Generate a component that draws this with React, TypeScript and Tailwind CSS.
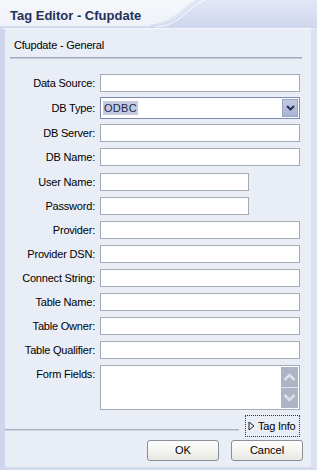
import React from "react";

const rows: { label: string; w: string; mt: string; kind?: "select" }[] = [
  { label: "Data Source:", w: "w-[200px]", mt: "mt-[15px]" },
  { label: "DB Type:", w: "w-[200px]", mt: "mt-[5px]", kind: "select" },
  { label: "DB Server:", w: "w-[200px]", mt: "mt-[5px]" },
  { label: "DB Name:", w: "w-[200px]", mt: "mt-[6px]" },
  { label: "User Name:", w: "w-[149px]", mt: "mt-[7px]" },
  { label: "Password:", w: "w-[149px]", mt: "mt-[6px]" },
  { label: "Provider:", w: "w-[200px]", mt: "mt-[6px]" },
  { label: "Provider DSN:", w: "w-[200px]", mt: "mt-[6px]" },
  { label: "Connect String:", w: "w-[200px]", mt: "mt-[6px]" },
  { label: "Table Name:", w: "w-[200px]", mt: "mt-[6px]" },
  { label: "Table Owner:", w: "w-[200px]", mt: "mt-[6px]" },
  { label: "Table Qualifier:", w: "w-[200px]", mt: "mt-[6px]" },
];

function Chevron({ up, color, big }: { up?: boolean; color: string; big?: boolean }) {
  if (big) {
    return (
      <svg width="13" height="8" viewBox="0 0 13 8">
        <path
          d={up ? "M1.5 7 L6.5 2 L11.5 7" : "M1.5 1 L6.5 6 L11.5 1"}
          fill="none"
          stroke={color}
          strokeWidth="2.5"
        />
      </svg>
    );
  }
  return (
    <svg width="9" height="6" viewBox="0 0 9 6">
      <path
        d={up ? "M1 5 L4.5 1.5 L8 5" : "M1 1 L4.5 4.5 L8 1"}
        fill="none"
        stroke={color}
        strokeWidth="2"
      />
    </svg>
  );
}

export default function App() {
  return (
    <div
      className="w-[317px] h-[470px] overflow-hidden bg-[#e9edf6] flex flex-col text-black"
      style={{ fontFamily: '"Liberation Sans", Arial, sans-serif' }}
    >
      {/* Title bar */}
      <div className="relative h-[28px] shrink-0 bg-gradient-to-b from-[#e2e7f5] to-[#cfd7ee]">
        <svg className="absolute inset-0" width="317" height="28" viewBox="0 0 317 28">
          <defs>
            <linearGradient id="tab" x1="0" y1="0" x2="0" y2="1">
              <stop offset="0" stopColor="#f7f8fc" />
              <stop offset="1" stopColor="#eef1f8" />
            </linearGradient>
          </defs>
          <path d="M0 0 H200 C185 4 178 24 152 26 H0 Z" fill="url(#tab)" />
          <path d="M205 0 C188 6 182 25 156 27" fill="none" stroke="#ffffff" strokeWidth="1" opacity="0.9" />
          <path d="M198 0 C182 6 176 23 150 25.5" fill="none" stroke="#c9d0e6" strokeWidth="1" opacity="0.8" />
          <path d="M0 26.5 H152" stroke="#d9deee" strokeWidth="1" />
        </svg>
        <div className="relative pl-[10px] pt-[8px] text-[13px] leading-[15px] font-bold text-[#243158]">
          Tag Editor - Cfupdate
        </div>
      </div>

      {/* Body */}
      <div className="flex-1 flex flex-col border-l-[5px] border-l-[#cfd5ed] border-r-[6px] border-r-[#dde2f2] border-t border-t-[#f4f6fb] border-b-[3px] border-b-[#d3d9ee]">
        <div className="pl-[9px] pt-[10px] text-[11px] leading-[13px] tracking-[-0.2px]">
          Cfupdate - General
        </div>
        <div className="ml-[5px] mt-[5px] w-[292px] h-[2px] bg-[#a3aabd] border-b border-b-[#c3c9d8]" />

        {rows.map((r) => (
          <div key={r.label} className={`flex items-center ${r.mt}`}>
            <div className="w-[90px] text-right text-[11px] leading-[13px] tracking-[-0.2px] whitespace-nowrap">
              {r.label}
            </div>
            {r.kind === "select" ? (
              <div className="ml-[5px] w-[200px] h-[22px] bg-white border border-[#7f8db4] flex items-center pl-[2px] pr-[1px]">
                <span className="bg-[#c5cbe0] text-[#1b2550] text-[11px] leading-[14px] px-[1px] tracking-[0.3px]">
                  ODBC
                </span>
                <div className="ml-auto w-[16px] h-[18px] bg-gradient-to-b from-[#c3cae2] to-[#a9b2d2] border border-[#97a2c6] flex items-center justify-center">
                  <Chevron color="#26325c" />
                </div>
              </div>
            ) : (
              <div className={`ml-[5px] ${r.w} h-[18px] bg-white border border-[#a4abb6]`} />
            )}
          </div>
        ))}

        {/* Form Fields */}
        <div className="flex items-start mt-[6px]">
          <div className="w-[90px] text-right text-[11px] leading-[13px] tracking-[-0.2px] pt-[3px]">
            Form Fields:
          </div>
          <div className="ml-[5px] w-[200px] h-[45px] bg-white border border-[#a4abb6] flex justify-end pt-[1px] pr-[1px]">
            <div className="w-[17px] h-[41px] flex flex-col bg-[#dfe3ec]">
              <div className="h-[20px] bg-[#aeb4c3] flex items-center justify-center">
                <Chevron up big color="#dde1ea" />
              </div>
              <div className="mt-[1px] h-[20px] bg-[#aeb4c3] flex items-center justify-center">
                <Chevron big color="#dde1ea" />
              </div>
            </div>
          </div>
        </div>

        {/* Tag Info row */}
        <div className="flex items-end mt-[5px] mr-[11px]">
          <div className="flex-1 h-[2px] mb-[6px] bg-[#a9b0c2] border-b border-b-[#d0d5e3]" />
          <div className="ml-[6px] w-[55px] h-[22px] border border-dotted border-[#333] flex items-center pl-[2px]">
            <svg width="7" height="10" viewBox="0 0 7 10" className="mr-[3px]">
              <path d="M1 1 L6 5 L1 9 Z" fill="none" stroke="#222" strokeWidth="1" />
            </svg>
            <span className="text-[11px] leading-[13px] tracking-[-0.2px]">Tag Info</span>
          </div>
        </div>

        {/* Buttons */}
        <div className="flex justify-end gap-[12px] mt-[3px] pr-[8px]">
          <div className="w-[72px] h-[21px] rounded-[3px] border border-[#8a8e99] bg-gradient-to-b from-[#ffffff] to-[#e8e8e2] flex items-center justify-center text-[11px] leading-[13px]">
            OK
          </div>
          <div className="w-[72px] h-[21px] rounded-[3px] border border-[#8a8e99] bg-gradient-to-b from-[#ffffff] to-[#e8e8e2] flex items-center justify-center text-[11px] leading-[13px]">
            Cancel
          </div>
        </div>
      </div>
    </div>
  );
}
